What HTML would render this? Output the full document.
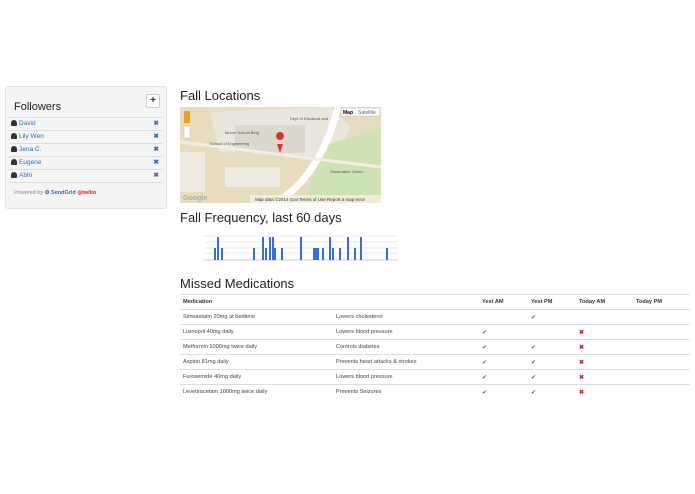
<!DOCTYPE html>
<html><head><meta charset="utf-8"><style>
body{margin:0;width:695px;height:494px;background:#fff;font-family:"Liberation Sans",Arial,sans-serif;color:#333;position:relative;overflow:hidden}
.abs{position:absolute}
.panel{left:5px;top:86px;width:162px;height:123px;background:#f5f5f5;border:1px solid #e3e3e3;border-radius:3px;box-sizing:border-box}
h2{margin:0;font-weight:normal;font-size:13px;color:#222;position:absolute}
.frow{position:absolute;left:9px;width:153px;height:12px;border-top:1px solid #ddd;font-size:6.5px;color:#2a6ebb;line-height:12px}
.frow .x{position:absolute;right:3px;top:0;color:#3b6fb0;font-weight:bold}
.person{display:inline-block;width:6px;height:6px;margin:0 2px 0 2px;vertical-align:-1px;background:#333;border-radius:3px 3px 1px 1px}
table{position:absolute;left:180px;top:294px;width:510px;border-collapse:collapse;font-size:5.6px;color:#444}
td,th{height:14px;border-top:1px solid #ddd;text-align:left;padding:0 0 0 3px;vertical-align:middle}
th{font-weight:bold;color:#333;border-bottom:1px solid #ddd;height:14px}
.ok{color:#3a7d3a;font-size:6px}.no{color:#b33;font-size:6px;font-weight:bold}
</style></head><body>
<div class="abs panel"></div>
<h2 style="left:14px;top:101px;font-size:11px">Followers</h2>
<div class="abs" style="left:146px;top:94px;width:12px;height:12px;background:#fff;border:1px solid #ccc;border-radius:2px;font-size:10px;line-height:11px;text-align:center;font-weight:bold">+</div>
<div class="frow" style="top:117px"><span class="person"></span>David<span class="x">✖</span></div>
<div class="frow" style="top:130px"><span class="person"></span>Lily Wen<span class="x">✖</span></div>
<div class="frow" style="top:143px"><span class="person"></span>Jena C.<span class="x">✖</span></div>
<div class="frow" style="top:156px"><span class="person"></span>Eugene<span class="x">✖</span></div>
<div class="frow" style="top:169px;border-bottom:1px solid #ddd"><span class="person"></span>Abhi<span class="x">✖</span></div>
<div class="abs" style="left:14px;top:190px;font-size:5.5px;color:#888">Powered by <span style="color:#2a6ebb;font-weight:bold">⚙ SendGrid</span> <span style="color:#d22;font-weight:bold">◎twilio</span></div>

<h2 style="left:180px;top:88px">Fall Locations</h2>
<svg class="abs" style="left:180px;top:107px" width="201" height="96">
<rect width="201" height="96" fill="#e8dcbf"/>
<polygon points="30,5 150,0 170,20 160,50 40,45" fill="#ebe6dd"/>
<rect x="55" y="18" width="70" height="28" fill="#ddd8ce"/>
<polygon points="140,40 201,20 201,96 125,96" fill="#cfe2b4"/>
<path d="M95,96 Q140,70 158,0" stroke="#fff" stroke-width="7" fill="none"/>
<path d="M0,35 L201,60" stroke="#f4eee2" stroke-width="3"/>
<rect x="45" y="60" width="55" height="20" fill="#eeeae2"/>
<rect x="0" y="45" width="25" height="40" fill="#eeeae2"/>
<path d="M100,33 a4,4 0 1 1 0.1,0 z" fill="#d33"/><path d="M97,37 L100,46 L103,37z" fill="#d33"/>
<rect x="4" y="4" width="6" height="12" fill="#e8a020"/>
<rect x="4" y="19" width="6" height="12" fill="#fff" stroke="#bbb" stroke-width=".5"/>
<rect x="161" y="1" width="39" height="8" fill="#fff" stroke="#bbb" stroke-width=".5"/>
<text x="163" y="7" font-size="5" font-weight="bold" fill="#000">Map</text><text x="178" y="7" font-size="5" fill="#666">Satellite</text>
<rect x="70" y="88" width="131" height="8" fill="#f5f0e6" opacity=".8"/>
<text x="75" y="94" font-size="4.5" fill="#333">Map data ©2014 Goo  Terms of Use    Report a map error</text>
<text x="3" y="93" font-size="7" fill="#aaa" font-weight="bold">Google</text>
<text x="45" y="27" font-size="4" fill="#555">Moore School Bldg</text>
<text x="30" y="38" font-size="4" fill="#555">School of Engineering</text>
<text x="110" y="13" font-size="4" fill="#555">Dept of Electrical and</text>
<text x="150" y="66" font-size="4" fill="#555">Shoemaker Green</text>
</svg>

<h2 style="left:180px;top:210px">Fall Frequency, last 60 days</h2>
<svg class="abs" style="left:204px;top:234px" width="194" height="28">
<g stroke="#e4e4e4" stroke-width=".7"><line x1="0" y1="2" x2="194" y2="2"/><line x1="0" y1="8" x2="194" y2="8"/><line x1="0" y1="14" x2="194" y2="14"/><line x1="0" y1="19" x2="194" y2="19"/></g>
<line x1="0" y1="26" x2="194" y2="26" stroke="#bbb" stroke-width=".7"/>
<g fill="#3a6fd0">
<rect x="10" y="14" width="2" height="12"/><rect x="13" y="3" width="2" height="23"/><rect x="17" y="14" width="2" height="12"/>
<rect x="49" y="14" width="2" height="12"/><rect x="58" y="3" width="2" height="23"/><rect x="61" y="14" width="2" height="12"/>
<rect x="65" y="3" width="2" height="23"/><rect x="68" y="3" width="2" height="23"/><rect x="70" y="14" width="2" height="12"/>
<rect x="77" y="14" width="2" height="12"/><rect x="96" y="3" width="2" height="23"/>
<rect x="109" y="14" width="2" height="12"/><rect x="111" y="14" width="2" height="12"/><rect x="113" y="14" width="2" height="12"/>
<rect x="118" y="14" width="2" height="12"/><rect x="125" y="3" width="2" height="23"/><rect x="128" y="14" width="2" height="12"/>
<rect x="135" y="14" width="2" height="12"/><rect x="143" y="3" width="2" height="23"/><rect x="150" y="14" width="2" height="12"/>
<rect x="156" y="3" width="2" height="23"/><rect x="182" y="14" width="2" height="12"/>
</g></svg>

<h2 style="left:180px;top:276px">Missed Medications</h2>
<table>
<tr><th style="width:150px">Medication</th><th style="width:143px"></th><th style="width:46px">Yest AM</th><th style="width:45px">Yest PM</th><th style="width:54px">Today AM</th><th>Today PM</th></tr>
<tr><td>Simvastatin 20mg at bedtime</td><td>Lowers cholesterol</td><td></td><td class="ok">✔</td><td></td><td></td></tr>
<tr><td>Lisinopril 40mg daily</td><td>Lowers blood pressure</td><td class="ok">✔</td><td></td><td class="no">✖</td><td></td></tr>
<tr><td>Metformin 1000mg twice daily</td><td>Controls diabetes</td><td class="ok">✔</td><td class="ok">✔</td><td class="no">✖</td><td></td></tr>
<tr><td>Aspirin 81mg daily</td><td>Prevents heart attacks &amp; strokes</td><td class="ok">✔</td><td class="ok">✔</td><td class="no">✖</td><td></td></tr>
<tr><td>Furosemide 40mg daily</td><td>Lowers blood pressure</td><td class="ok">✔</td><td class="ok">✔</td><td class="no">✖</td><td></td></tr>
<tr><td>Levetiracetam 1000mg twice daily</td><td>Prevents Seizures</td><td class="ok">✔</td><td class="ok">✔</td><td class="no">✖</td><td></td></tr>
</table>
</body></html>
